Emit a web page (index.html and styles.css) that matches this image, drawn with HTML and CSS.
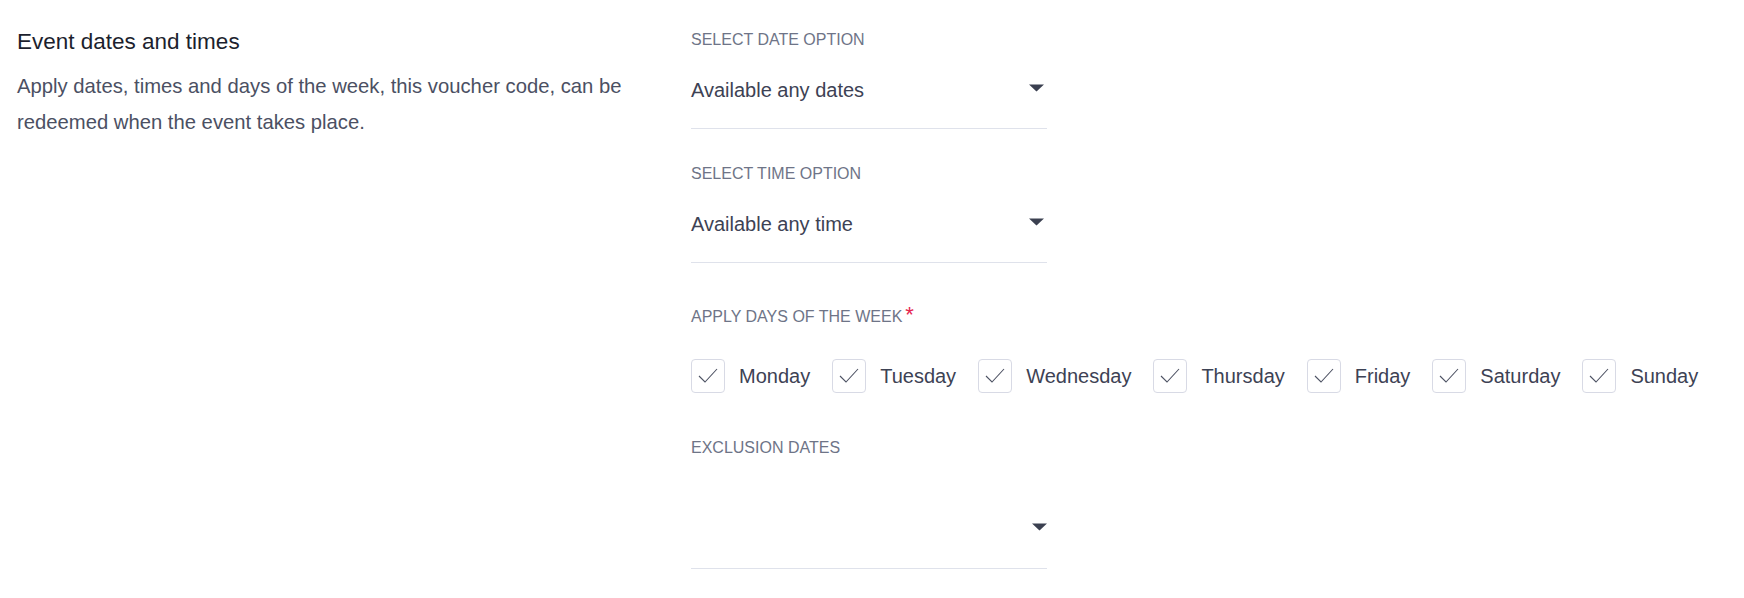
FILE: index.html
```html
<!DOCTYPE html>
<html lang="en">
<head>
    <meta charset="UTF-8">
    <meta name="viewport" content="width=device-width, initial-scale=1.0">
    <title>Event dates and times</title>
    <link rel="stylesheet" href="styles.css">
</head>
<body>
    <div class="page">
        <section class="event-section">
            <div class="intro">
                <h2 class="intro-title">Event dates and times</h2>
                <p class="intro-text">Apply dates, times and days of the week, this voucher code, can be redeemed when the event takes place.</p>
            </div>

            <div class="fields">
                <div class="field">
                    <label class="field-label">SELECT DATE OPTION</label>
                    <div class="select">
                        <span class="select-value">Available any dates</span>
                        <svg class="select-arrow" width="15" height="8" viewBox="0 0 15 8"><path d="M0 0.5 H15 L7.5 7.5 Z" fill="#3b4050"/></svg>
                    </div>
                </div>

                <div class="field">
                    <label class="field-label">SELECT TIME OPTION</label>
                    <div class="select">
                        <span class="select-value">Available any time</span>
                        <svg class="select-arrow" width="15" height="8" viewBox="0 0 15 8"><path d="M0 0.5 H15 L7.5 7.5 Z" fill="#3b4050"/></svg>
                    </div>
                </div>

                <div class="field field-days">
                    <label class="field-label">APPLY DAYS OF THE WEEK<span class="required">*</span></label>
                    <div class="days">
                        <label class="day"><span class="day-box"><svg width="34" height="34" viewBox="0 0 34 34"><path d="M8 17 L14 23 L26 10" fill="none" stroke="#4d5263" stroke-width="1.1"/></svg></span>Monday</label>
                        <label class="day"><span class="day-box"><svg width="34" height="34" viewBox="0 0 34 34"><path d="M8 17 L14 23 L26 10" fill="none" stroke="#4d5263" stroke-width="1.1"/></svg></span>Tuesday</label>
                        <label class="day"><span class="day-box"><svg width="34" height="34" viewBox="0 0 34 34"><path d="M8 17 L14 23 L26 10" fill="none" stroke="#4d5263" stroke-width="1.1"/></svg></span>Wednesday</label>
                        <label class="day"><span class="day-box"><svg width="34" height="34" viewBox="0 0 34 34"><path d="M8 17 L14 23 L26 10" fill="none" stroke="#4d5263" stroke-width="1.1"/></svg></span>Thursday</label>
                        <label class="day"><span class="day-box"><svg width="34" height="34" viewBox="0 0 34 34"><path d="M8 17 L14 23 L26 10" fill="none" stroke="#4d5263" stroke-width="1.1"/></svg></span>Friday</label>
                        <label class="day"><span class="day-box"><svg width="34" height="34" viewBox="0 0 34 34"><path d="M8 17 L14 23 L26 10" fill="none" stroke="#4d5263" stroke-width="1.1"/></svg></span>Saturday</label>
                        <label class="day"><span class="day-box"><svg width="34" height="34" viewBox="0 0 34 34"><path d="M8 17 L14 23 L26 10" fill="none" stroke="#4d5263" stroke-width="1.1"/></svg></span>Sunday</label>
                    </div>
                </div>

                <div class="field">
                    <label class="field-label">EXCLUSION DATES</label>
                    <div class="select select-tall">
                        <span class="select-value"></span>
                        <svg class="select-arrow select-arrow-flush" width="15" height="8" viewBox="0 0 15 8"><path d="M0 0.5 H15 L7.5 7.5 Z" fill="#3b4050"/></svg>
                    </div>
                </div>
            </div>
        </section>
    </div>
</body>
</html>
```

FILE: styles.css
```css
body {
    margin: 0;
    padding: 0;
    background-color: #ffffff;
    font-family: "Liberation Sans", Arial, sans-serif;
}
.page {
    padding: 30px 0 0 17px;
}
.event-section {
    display: grid;
    grid-template-columns: 640px 1fr;
    column-gap: 34px;
}
.intro-title {
    margin: 0;
    font-size: 22.5px;
    line-height: 24px;
    font-weight: 400;
    color: #1c1f2e;
}
.intro-text {
    margin: 14px 0 0;
    font-size: 20.25px;
    line-height: 36px;
    color: #4b5063;
}
.fields {
    display: flex;
    flex-direction: column;
}
.field {
    margin-bottom: 35px;
}
.field-label {
    display: block;
    font-size: 16px;
    line-height: 20px;
    color: #6e7487;
}
.required {
    margin-left: 3px;
    font-size: 22px;
    line-height: 0;
    vertical-align: 0;
    color: #e5264f;
}
.select {
    display: flex;
    align-items: center;
    justify-content: space-between;
    width: 356px;
    padding: 28px 0 26px;
    border-bottom: 1px solid #dfe2eb;
}
.select-tall {
    padding: 59px 0 27px;
}
.select-value {
    display: block;
    min-height: 24px;
    font-size: 20px;
    line-height: 24px;
    color: #3d4254;
}
.select-arrow {
    display: block;
    margin: 0 3px 5px 0;
}
.select-arrow-flush {
    margin-right: 0;
}
.field-days {
    margin-top: 9px;
    margin-bottom: 45px;
}
.days {
    display: flex;
    gap: 22px;
    margin-top: 32px;
}
.day {
    display: flex;
    align-items: center;
    gap: 14px;
    font-size: 20px;
    line-height: 24px;
    color: #3d4254;
}
.day-box {
    display: block;
    width: 34px;
    height: 34px;
    box-sizing: border-box;
    border: 1px solid #d8dae5;
    border-radius: 4px;
}
.day-box svg {
    display: block;
    margin: -1px;
}
```
